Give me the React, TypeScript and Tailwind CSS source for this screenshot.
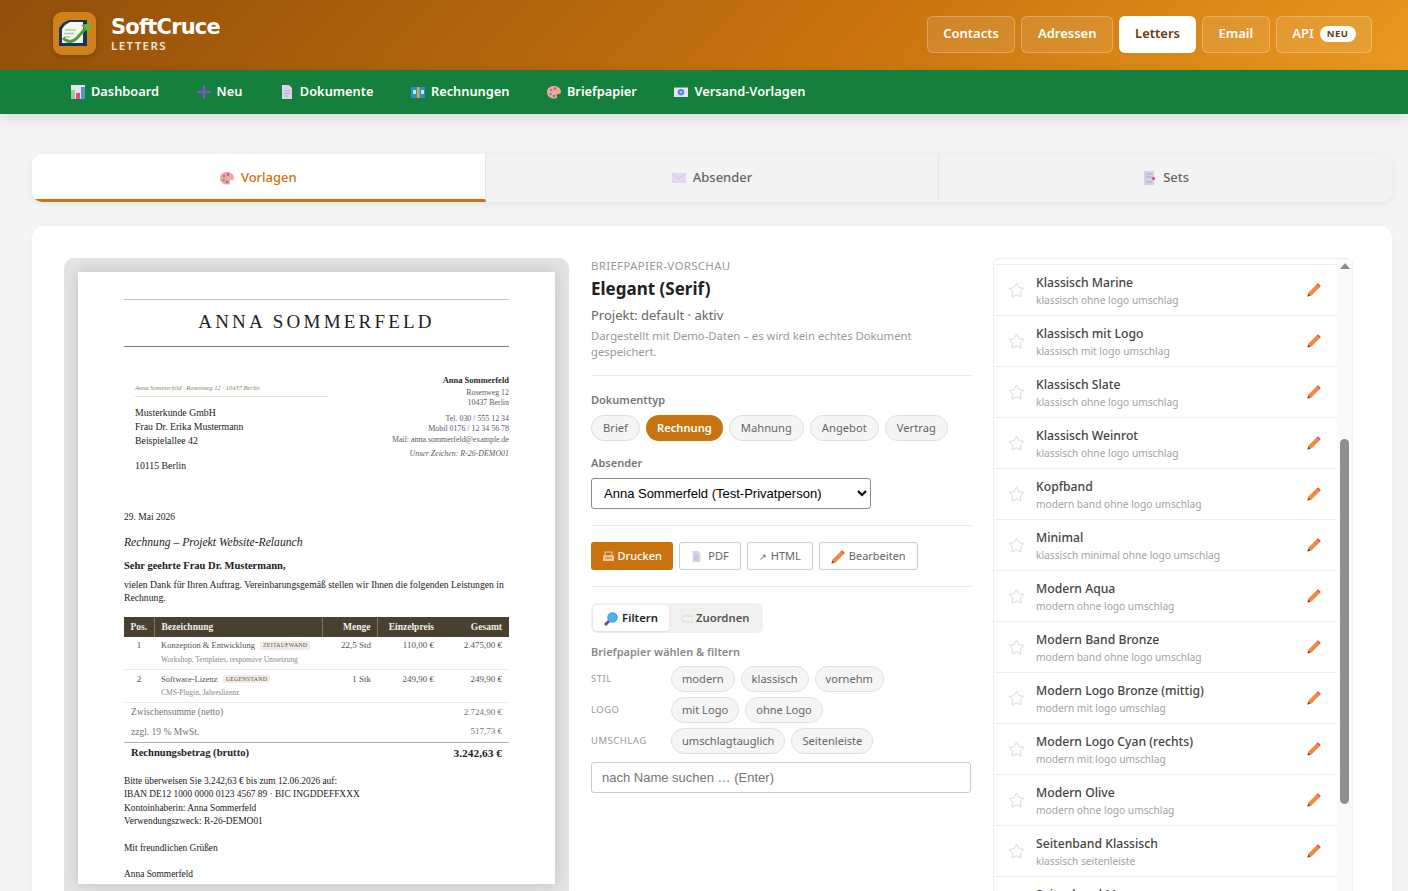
import { Star } from "lucide-react";

const SANS = "font-['Noto_Sans',sans-serif]";

function Logo() {
  return (
    <div className="flex h-[43px] w-[43px] items-center justify-center rounded-[9px] bg-[#d0811a] shadow-[0_2px_6px_rgba(0,0,0,0.2)]">
      <svg width="36" height="30" viewBox="0 0 36 30">
        <path d="M6 4 L12 1 H30 V27 H2 V9 Z" fill="#17365f" />
        <path d="M8 6 L13 3 H26 V24 H5 V10 Z" fill="#f5f5f2" />
        <path d="M8 11 H19 M7 14.5 H17 M7 18 H13" stroke="#a9cf8f" strokeWidth="1.5" />
        <path d="M6 19 Q13 26 20 19 L29 9" stroke="#4f9d2f" strokeWidth="3" fill="none" />
        <path d="M24 6 L35 4 L32 14 Z" fill="#6db33f" />
      </svg>
    </div>
  );
}

function BarsIcon() {
  return (
    <svg width="14" height="14" viewBox="0 0 14 14">
      <rect width="14" height="14" fill="#e8e4ea" />
      <rect x="0" y="5" width="4" height="9" fill="#8fd18f" />
      <rect x="5" y="8" width="4" height="6" fill="#e8488a" />
      <rect x="10" y="2" width="4" height="12" fill="#4a9ad9" />
    </svg>
  );
}

function PlusIcon() {
  return (
    <svg width="14" height="14" viewBox="0 0 14 14">
      <path d="M7 0 V14 M0 7 H14" stroke="#7656c0" strokeWidth="2.4" />
    </svg>
  );
}

function DocIcon({ size = 14 }: { size?: number }) {
  return (
    <svg width={size} height={size} viewBox="0 0 14 14">
      <path d="M2 0 H9 L12 3 V14 H2 Z" fill="#dcd3ea" />
      <path d="M4 6 H10 M4 8.5 H10 M4 11 H8" stroke="#b5a8cc" strokeWidth="1" />
    </svg>
  );
}

function LedgerIcon() {
  return (
    <svg width="14" height="14" viewBox="0 0 14 14">
      <rect x="0" y="2" width="14" height="11" fill="#2e8fd0" />
      <rect x="6" y="2" width="2.5" height="11" fill="#e8a33a" />
      <rect x="2" y="5" width="3" height="4" fill="#bfe3f7" />
      <rect x="10" y="5" width="3" height="4" fill="#bfe3f7" />
    </svg>
  );
}

function PaletteIcon({ size = 14 }: { size?: number }) {
  return (
    <svg width={size} height={size} viewBox="0 0 14 14">
      <path d="M7 1 C11 1 14 3.5 14 7 C14 9 12 9 11 9 C9.500 9 9.500 10.500 10 11.500 C10.500 13 9 13.500 7 13.500 C3 13.500 0 11 0 7 C0 3.500 3 1 7 1 Z" fill="#f4a79a" />
      <circle cx="4" cy="5" r="1.300" fill="#e85a9a" />
      <circle cx="8" cy="3.600" r="1.300" fill="#a05ad0" />
      <circle cx="3.500" cy="9" r="1.300" fill="#4ab0a0" />
      <circle cx="7" cy="11" r="1.300" fill="#4a8ad9" />
    </svg>
  );
}

function EnvelopeIcon() {
  return (
    <svg width="14" height="14" viewBox="0 0 14 14">
      <rect x="0" y="2.500" width="14" height="9.500" fill="#e3e3f2" />
      <circle cx="7" cy="7.200" r="3.200" fill="#5b82d8" />
      <circle cx="7" cy="7.200" r="1.300" fill="#a8bdec" />
    </svg>
  );
}

function MailIcon() {
  return (
    <svg width="14" height="14" viewBox="0 0 14 14">
      <rect x="0" y="2" width="14" height="10" fill="#e2d9ef" />
      <path d="M0 2 L7 8 L14 2" stroke="#d0c3e4" fill="none" />
    </svg>
  );
}

function SetsIcon() {
  return (
    <svg width="14" height="14" viewBox="0 0 14 14">
      <rect x="2" y="0" width="10" height="14" fill="#d8cfe6" />
      <path d="M4 3 H10 M4 6 H10 M4 11 H10" stroke="#b5a8cc" />
      <rect x="10" y="6" width="3" height="3" fill="#e85a9a" />
    </svg>
  );
}

function PrinterIcon() {
  return (
    <svg width="11" height="11" viewBox="0 0 11 11">
      <rect x="2" y="1" width="7" height="4" fill="none" stroke="#f1c9a0" />
      <rect x="0" y="4.500" width="11" height="5.500" fill="#f1c9a0" />
      <rect x="2" y="6.500" width="7" height="1" fill="#c8730f" />
    </svg>
  );
}

function PencilIcon() {
  return (
    <svg width="14" height="14" viewBox="0 0 14 14">
      <path d="M0.500 13.500 L1.500 9.500 L9.500 1.500 L12.500 4.500 L4.500 12.500 Z" fill="#f58a3c" />
      <path d="M9.500 1.500 L11 0.200 L13.800 3 L12.500 4.500 Z" fill="#e8534a" />
      <path d="M0.500 13.500 L1.200 10.500 L3.500 12.800 Z" fill="#6b4a3a" />
    </svg>
  );
}

function MagnifierIcon() {
  return (
    <svg width="14" height="14" viewBox="0 0 14 14">
      <circle cx="8.500" cy="5.500" r="4.800" fill="#45b6e8" stroke="#2f8fc4" strokeWidth="0.800" />
      <path d="M5 9 L1 13" stroke="#7b3f98" strokeWidth="2.800" />
    </svg>
  );
}

function TagIcon() {
  return (
    <svg width="12" height="10" viewBox="0 0 12 10">
      <path d="M3 2 H12 V8 H3 L0 5 Z" fill="#f4f1ec" stroke="#d3d3d3" strokeWidth="0.800" />
    </svg>
  );
}

function Pill({ children, active }: { children: string; active?: boolean }) {
  return (
    <span
      className={
        active
          ? "flex h-[26px] items-center rounded-full bg-[#c8730f] px-[11px] text-[11.200px] font-semibold text-white"
          : "flex h-[26px] items-center rounded-full border border-[#e0e0e0] bg-[#f5f5f5] px-[11px] text-[11.200px] text-[#666666]"
      }
    >
      {children}
    </span>
  );
}

function FilterRow({ label, items }: { label: string; items: string[] }) {
  return (
    <div className="flex items-center">
      <span className="w-[80px] text-[9.500px] tracking-[0.5px] text-[#999999]">{label}</span>
      <div className="flex gap-[6px]">
        {items.map((i) => (
          <span key={i} className="flex h-[26px] items-center rounded-full border border-[#e0e0e0] bg-[#f5f5f5] px-[10px] text-[11.100px] text-[#666666]">
            {i}
          </span>
        ))}
      </div>
    </div>
  );
}

const sets = [
  ["Klassisch Marine", "klassisch ohne logo umschlag"],
  ["Klassisch mit Logo", "klassisch mit logo umschlag"],
  ["Klassisch Slate", "klassisch ohne logo umschlag"],
  ["Klassisch Weinrot", "klassisch ohne logo umschlag"],
  ["Kopfband", "modern band ohne logo umschlag"],
  ["Minimal", "klassisch minimal ohne logo umschlag"],
  ["Modern Aqua", "modern ohne logo umschlag"],
  ["Modern Band Bronze", "modern band ohne logo umschlag"],
  ["Modern Logo Bronze (mittig)", "modern mit logo umschlag"],
  ["Modern Logo Cyan (rechts)", "modern mit logo umschlag"],
  ["Modern Olive", "modern ohne logo umschlag"],
  ["Seitenband Klassisch", "klassisch seitenleiste"],
  ["Seitenband Mono", "klassisch seitenleiste"],
];

function Letter() {
  return (
    <div className="h-[612px] w-[477px] shrink-0 bg-white font-['Liberation_Serif',serif] text-[#1a1a1a] shadow-[0_0_16px_rgba(0,0,0,0.16)]">
      <div className="px-[46px] pt-[27px]">
        <div className="flex h-[48px] items-center justify-center border-y border-t-[#c5bfb5] border-b-[#8a7d68] pb-[1px] text-[19px] tracking-[3.2px] text-[#222222]">
          ANNA SOMMERFELD
        </div>

        <div className="mt-[27px] flex justify-between pl-[11px]">
          <div className="w-[193px] pt-[9px]">
            <div className="border-b border-[#e8e3d8] pb-[3px] text-[6.500px] italic leading-[10px] text-[#8c8270]">
              Anna Sommerfeld · Rosenweg 12 · 10437 Berlin
            </div>
            <div className="mt-[9px] text-[9.800px] leading-[14px]">
              <div>Musterkunde GmbH</div>
              <div>Frau Dr. Erika Mustermann</div>
              <div>Beispielallee 42</div>
              <div className="mt-[11px]">10115 Berlin</div>
            </div>
          </div>
          <div className="pt-[1px] text-right text-[7.900px] leading-[10.500px] text-[#5a5a6a]">
            <div className="mb-[2px] text-[8.500px] font-bold text-[#2a2a2a]">Anna Sommerfeld</div>
            <div>Rosenweg 12</div>
            <div>10437 Berlin</div>
            <div className="mt-[5px]">Tel. 030 / 555 12 34</div>
            <div>Mobil 0176 / 12 34 56 78</div>
            <div>Mail: anna.sommerfeld@example.de</div>
            <div className="mt-[4px] italic">Unser Zeichen: R-26-DEMO01</div>
          </div>
        </div>

        <div className="mt-[38px] text-[9.500px] leading-[13px]">29. Mai 2026</div>
        <div className="mt-[12px] text-[11.650px] italic leading-[14px]">Rechnung – Projekt Website-Relaunch</div>
        <div className="mt-[9px] text-[10.500px] font-bold leading-[13px]">Sehr geehrte Frau Dr. Mustermann,</div>
        <div className="mt-[7px] text-[9.680px] leading-[12.500px]">
          vielen Dank für Ihren Auftrag. Vereinbarungsgemäß stellen wir Ihnen die folgenden Leistungen in Rechnung.
        </div>

        <table className="mt-[13px] w-full border-collapse text-[9px] text-[#55504a]">
          <thead>
            <tr className="h-[20px] bg-[#4a4030] text-[9.500px] font-bold text-[#f2efe8]">
              <th className="w-[30px] border-r border-[#7c7362] text-center">Pos.</th>
              <th className="border-r border-[#7c7362] pl-[7px] text-left">Bezeichnung</th>
              <th className="w-[55px] border-r border-[#7c7362] pr-[6px] text-right">Menge</th>
              <th className="w-[64px] pr-[7px] text-right">Einzelpreis</th>
              <th className="w-[68px] pr-[7px] text-right">Gesamt</th>
            </tr>
          </thead>
          <tbody>
            <tr className="h-[32px] border-b border-[#eeeae2] align-top">
              <td className="pt-[2px] text-center">1</td>
              <td className="pl-[7px] pt-[2px]">
                <div className="flex items-center gap-[5px] text-[8.500px]">
                  Konzeption &amp; Entwicklung
                  <span className="rounded-[2px] bg-[#f1ede4] px-[3px] text-[5.800px] tracking-[0.3px]">ZEITAUFWAND</span>
                </div>
                <div className="mt-[2px] text-[7.500px] text-[#8a8490]">Workshop, Templates, responsive Umsetzung</div>
              </td>
              <td className="pr-[6px] pt-[2px] text-right">22,5 Std</td>
              <td className="pr-[7px] pt-[2px] text-right">110,00 €</td>
              <td className="pr-[7px] pt-[2px] text-right">2.475,00 €</td>
            </tr>
            <tr className="h-[33px] border-b border-[#eeeae2] align-top">
              <td className="pt-[3px] text-center">2</td>
              <td className="pl-[7px] pt-[3px]">
                <div className="flex items-center gap-[5px] text-[8.500px]">
                  Software-Lizenz
                  <span className="rounded-[2px] bg-[#f1ede4] px-[3px] text-[5.800px] tracking-[0.3px]">GEGENSTAND</span>
                </div>
                <div className="mt-[2px] text-[7.500px] text-[#8a8490]">CMS-Plugin, Jahreslizenz</div>
              </td>
              <td className="pr-[6px] pt-[3px] text-right">1 Stk</td>
              <td className="pr-[7px] pt-[3px] text-right">249,90 €</td>
              <td className="pr-[7px] pt-[3px] text-right">249,90 €</td>
            </tr>
            <tr className="h-[20px] text-[#77727a]">
              <td colSpan={4} className="pl-[7px] text-[9.500px]">Zwischensumme (netto)</td>
              <td className="pr-[7px] text-right">2.724,90 €</td>
            </tr>
            <tr className="h-[20px] border-b border-[#b5b0a6] text-[#77727a]">
              <td colSpan={4} className="pl-[7px] text-[9.500px]">zzgl. 19 % MwSt.</td>
              <td className="pr-[7px] text-right">517,73 €</td>
            </tr>
            <tr className="h-[22px] text-[#222222]">
              <td colSpan={4} className="pl-[7px] text-[10.600px] font-bold">Rechnungsbetrag (brutto)</td>
              <td className="pr-[7px] text-right text-[11.400px] font-bold">3.242,63 €</td>
            </tr>
          </tbody>
        </table>

        <div className="mt-[10.500px] text-[9.400px] leading-[13.500px]">
          <div>Bitte überweisen Sie 3.242,63 € bis zum 12.06.2026 auf:</div>
          <div>IBAN DE12 1000 0000 0123 4567 89 · BIC INGDDEFFXXX</div>
          <div>Kontoinhaberin: Anna Sommerfeld</div>
          <div>Verwendungszweck: R-26-DEMO01</div>
          <div className="mt-[13px]">Mit freundlichen Grüßen</div>
          <div className="mt-[13px]">Anna Sommerfeld</div>
        </div>
      </div>
    </div>
  );
}

export default function App() {
  const topLinks = ["Contacts", "Adressen"];
  return (
    <div className={`h-[891px] overflow-hidden bg-[#f5f5f5] ${SANS}`}>
      <header className="flex h-[70px] items-center justify-between bg-[linear-gradient(135deg,#92500a_0%,#c8730f_60%,#e8991f_100%)] pl-[53px] pr-[36px]">
        <div className="mb-[3px] flex items-center gap-[15px]">
          <Logo />
          <div>
            <div className="font-['DejaVu_Sans',sans-serif] text-[21px] font-bold leading-[24px] tracking-[-0.8px] text-white">SoftCruce</div>
            <div className="text-[11.500px] font-semibold leading-[13px] tracking-[1.400px] text-white/85">LETTERS</div>
          </div>
        </div>
        <nav className="mb-[2px] flex gap-[6px] text-[13px] font-semibold text-white">
          {topLinks.map((l) => (
            <span key={l} className="flex h-[37px] items-center rounded-[6px] border border-white/25 bg-white/10 px-[15.500px]">{l}</span>
          ))}
          <span className="flex h-[37px] w-[77px] items-center justify-center rounded-[6px] bg-white text-[#6b3a10]">Letters</span>
          <span className="flex h-[37px] items-center rounded-[6px] border border-white/25 bg-white/10 px-[15.500px]">Email</span>
          <span className="flex h-[37px] items-center gap-[6px] rounded-[6px] border border-white/25 bg-white/10 px-[15.500px]">
            API
            <span className="rounded-full bg-white px-[7px] text-[9.500px] font-bold leading-[16px] tracking-[0.5px] text-[#6b3a10]">NEU</span>
          </span>
        </nav>
      </header>

      <nav className="flex h-[44px] items-center gap-[37.500px] bg-[#15803d] pl-[71px] text-[12.800px] font-semibold text-white shadow-[0_4px_14px_rgba(0,0,0,0.12)]">
        <span className="flex items-center gap-[6px]"><BarsIcon />Dashboard</span>
        <span className="flex items-center gap-[6px]"><PlusIcon />Neu</span>
        <span className="flex items-center gap-[6px]"><DocIcon />Dokumente</span>
        <span className="flex items-center gap-[6px]"><LedgerIcon />Rechnungen</span>
        <span className="flex items-center gap-[6px]"><PaletteIcon />Briefpapier</span>
        <span className="flex items-center gap-[6px]"><EnvelopeIcon />Versand-Vorlagen</span>
      </nav>

      <main className="pl-[32px] pr-[16px] pt-[40px]">
        <div className="flex h-[48px] overflow-hidden rounded-[10px] bg-[#f3f3f3] text-[13px] font-medium text-[#666666] shadow-[0_2px_8px_rgba(0,0,0,0.08)]">
          <div className="flex flex-1 items-center justify-center gap-[7px] border-b-[3px] border-r border-b-[#c8730f] border-r-[#e5e5e5] bg-white pt-[2px] text-[#c8730f]"><PaletteIcon />Vorlagen</div>
          <div className="flex flex-1 items-center justify-center gap-[7px] border-r border-[#e5e5e5]"><MailIcon />Absender</div>
          <div className="flex flex-1 items-center justify-center gap-[7px]"><SetsIcon />Sets</div>
        </div>

        <section className="mt-[24px] flex h-[700px] rounded-[12px] bg-white pl-[32px] pr-[39px] pt-[32px] shadow-[0_2px_8px_rgba(0,0,0,0.05)]">
          <div className="h-[700px] w-[505px] shrink-0 rounded-[10px] bg-[#e4e4e2] px-[14px] pt-[14px]">
            <Letter />
          </div>

          <div className="ml-[22px] w-[380px] shrink-0">
            <div className="text-[11.500px] leading-[16px] tracking-[0.3px] text-[#999999]">BRIEFPAPIER-VORSCHAU</div>
            <h1 className="mt-[3px] text-[17px] font-bold leading-[24px] text-[#222222]">Elegant (Serif)</h1>
            <div className="mt-[5px] text-[13px] leading-[18px] text-[#666666]">Projekt: default · aktiv</div>
            <div className="mt-[4px] text-[11.300px] leading-[16px] text-[#999999]">Dargestellt mit Demo-Daten – es wird kein echtes Dokument gespeichert.</div>

            <div className="mt-[15px] border-t border-[#e8e8e8]" />

            <div className="mt-[16px] text-[11px] font-semibold leading-[16px] text-[#777777]">Dokumenttyp</div>
            <div className="mt-[7px] flex gap-[6px]">
              <Pill>Brief</Pill>
              <Pill active>Rechnung</Pill>
              <Pill>Mahnung</Pill>
              <Pill>Angebot</Pill>
              <Pill>Vertrag</Pill>
            </div>

            <div className="mt-[14px] text-[11px] font-semibold leading-[16px] text-[#777777]">Absender</div>
            <select className="mt-[7px] h-[31px] w-[280px] rounded-[3px] border border-[#8a8a8a] bg-white px-[8px] font-['Liberation_Sans',sans-serif] text-[13px] text-black">
              <option>Anna Sommerfeld (Test-Privatperson)</option>
            </select>

            <div className="mt-[16px] border-t border-[#e8e8e8]" />

            <div className="mt-[16px] flex gap-[6px] text-[11px] text-[#666666]">
              <span className="flex h-[28px] items-center gap-[4px] rounded-[3px] bg-[#c8730f] px-[11.500px] pt-[1px] font-medium text-white"><PrinterIcon />Drucken</span>
              <span className="flex h-[28px] items-center gap-[6px] rounded-[3px] border border-[#cccccc] px-[11px] pt-[1px]"><DocIcon size={11} />PDF</span>
              <span className="flex h-[28px] items-center gap-[4px] rounded-[3px] border border-[#cccccc] px-[11px] pt-[1px]"><span className="text-[9px]">↗</span>HTML</span>
              <span className="flex h-[28px] items-center gap-[4px] rounded-[3px] border border-[#cccccc] px-[11px] pt-[1px]"><PencilIcon />Bearbeiten</span>
            </div>

            <div className="mt-[16px] border-t border-[#e8e8e8]" />

            <div className="mt-[16px] flex h-[30px] w-[172px] items-center rounded-[6px] bg-[#f0f0f0] p-[2px] text-[11.300px] font-semibold text-[#555555]">
              <span className="flex h-[26px] w-[76px] items-center justify-center gap-[4px] rounded-[4px] bg-white pt-[1px] text-[#222222] shadow-[0_1px_2px_rgba(0,0,0,0.08)]"><MagnifierIcon />Filtern</span>
              <span className="ml-[12px] flex items-center gap-[3px] pt-[1px]"><TagIcon />Zuordnen</span>
            </div>

            <div className="mt-[11px] text-[11px] font-semibold leading-[16px] text-[#888888]">Briefpapier wählen &amp; filtern</div>

            <div className="mt-[6px] flex flex-col gap-[5px]">
              <FilterRow label="STIL" items={["modern", "klassisch", "vornehm"]} />
              <FilterRow label="LOGO" items={["mit Logo", "ohne Logo"]} />
              <FilterRow label="UMSCHLAG" items={["umschlagtauglich", "Seitenleiste"]} />
            </div>

            <input
              placeholder="nach Name suchen … (Enter)"
              className="mt-[8px] h-[31px] w-full rounded-[3px] border border-[#cccccc] px-[10px] font-['Liberation_Sans',sans-serif] text-[13px] text-[#666666] placeholder:text-[#757575]"
            />
          </div>

          <div className="ml-[22px] flex h-[700px] w-[360px] shrink-0 rounded-t-[6px] border border-[#eeeeee]">
            <div className="flex-1">
              <div className="h-[6px] border-b border-[#eeeeee]" />
              {sets.map(([name, tags]) => (
                <div key={name} className="flex h-[51px] items-center border-b border-[#eeeeee] pl-[14px] pr-[16px]">
                  <Star size={17} strokeWidth={1} className="mr-[11px] text-[#c8c8c8]" />
                  <div className="flex-1">
                    <div className="text-[12.200px] font-medium leading-[19px] text-[#444444]">{name}</div>
                    <div className="text-[10.200px] leading-[16px] text-[#a3a3a3]">{tags}</div>
                  </div>
                  <PencilIcon />
                </div>
              ))}
            </div>
            <div className="flex w-[15px] flex-col items-center bg-[#fafafa] pt-[4px]">
              <div className="h-0 w-0 border-x-[5px] border-b-[6px] border-x-transparent border-b-[#8a8a8a]" />
              <div className="mt-[170px] h-[365px] w-[9px] rounded-full bg-[#8f8f8f]" />
            </div>
          </div>
        </section>
      </main>
    </div>
  );
}
